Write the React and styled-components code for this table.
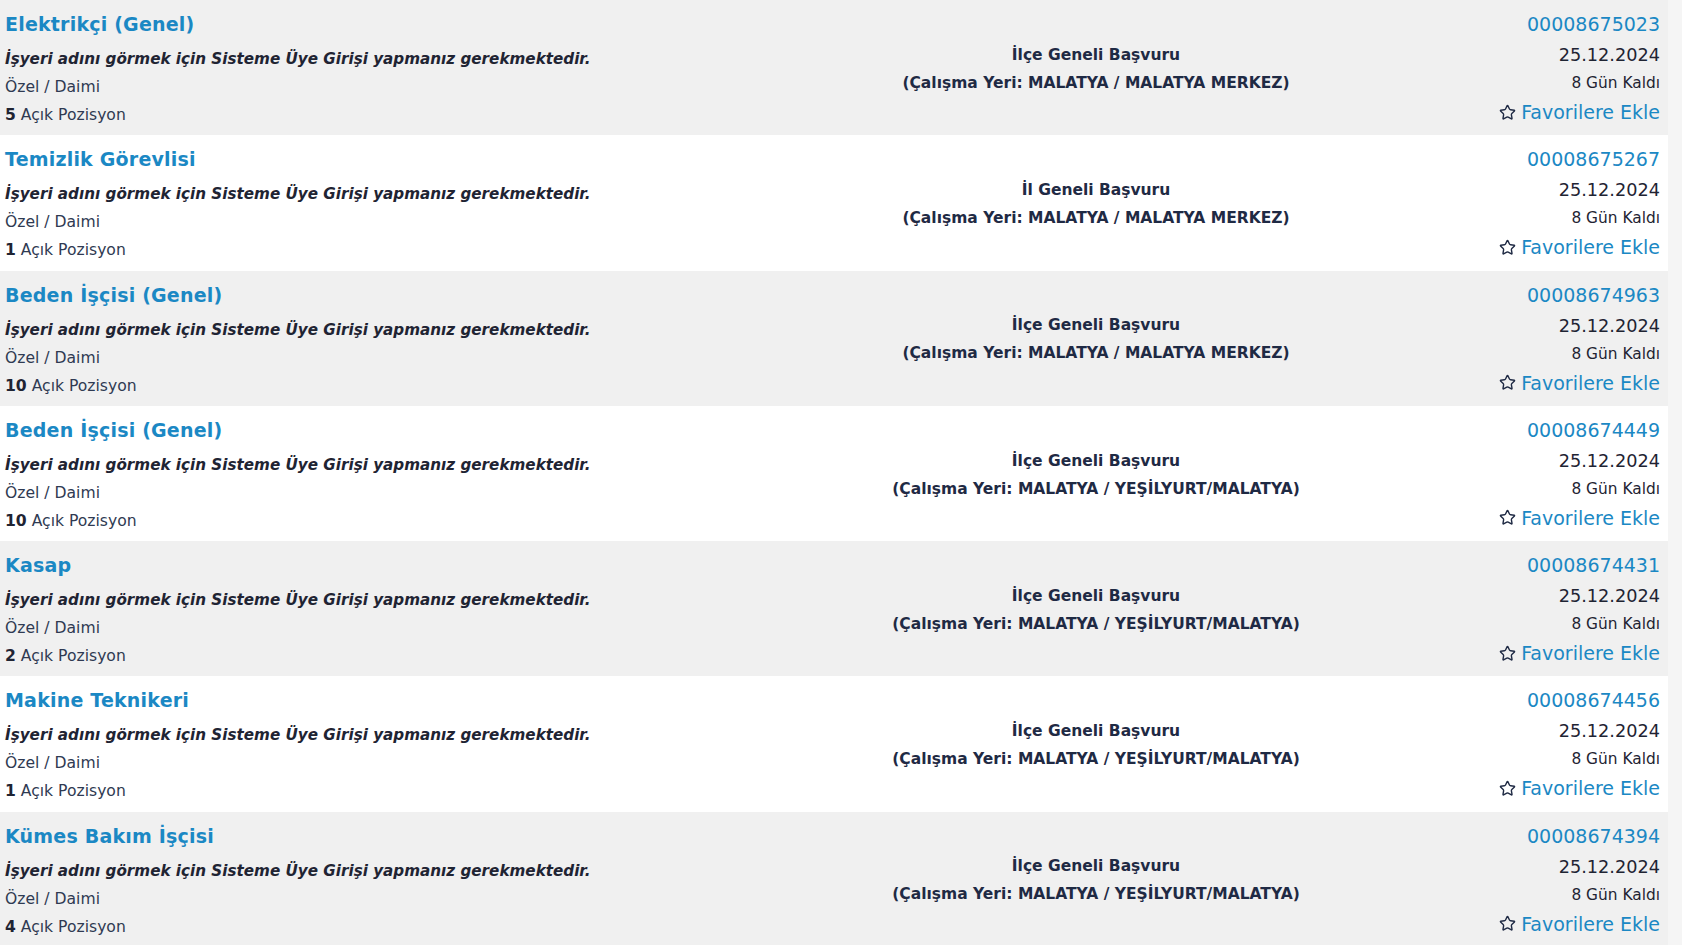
import React from "react";
import styled, { createGlobalStyle } from "styled-components";
import { Star } from "lucide-react";

const GlobalStyle = createGlobalStyle`
  html, body {
    margin: 0;
    padding: 0;
    background: #f6f6f6;
    font-family: "DejaVu Sans", Verdana, sans-serif;
    overflow: hidden;
  }
`;

const Page = styled.div`
  width: 1682px;
  height: 945px;
  overflow: hidden;
  display: flex;
  background: #f5f5f5;
`;

const List = styled.div`
  width: 1668px;
  display: flex;
  flex-direction: column;
`;

const Row = styled.div`
  height: 135.3px;
  flex-shrink: 0;
  display: grid;
  grid-template-columns: 820px 552px 1fr;
  background: ${(p) => (p.$alt ? "#ffffff" : "#f0f0f0")};
  box-sizing: border-box;
`;

const Left = styled.div`
  display: flex;
  flex-direction: column;
  padding: 10px 0 0 5px;
`;

const Title = styled.a`
  font-size: 19px;
  font-weight: bold;
  line-height: 28px;
  color: #1b88c4;
  text-decoration: none;
  margin-bottom: 7px;
  letter-spacing: 0.2px;
`;

const Notice = styled.div`
  font-size: 15.2px;
  font-weight: bold;
  font-style: italic;
  line-height: 28px;
  color: #1f2433;
`;

const Line = styled.div`
  font-size: 15.6px;
  line-height: 28px;
  color: #2f3a52;

  b {
    color: #1f2433;
  }
`;

const Middle = styled.div`
  display: flex;
  flex-direction: column;
  justify-content: center;
  align-items: center;
  padding-top: 2px;
  font-size: 15.5px;
  font-weight: bold;
  line-height: 28px;
  color: #1f2a44;
  text-align: center;
`;

const Right = styled.div`
  display: flex;
  flex-direction: column;
  align-items: flex-end;
  padding: 10px 8px 0 0;
`;

const Code = styled.a`
  font-size: 19px;
  line-height: 28px;
  color: #1b88c4;
  text-decoration: none;
  margin-bottom: 3px;
`;

const DateText = styled.div`
  font-size: 17.7px;
  line-height: 28px;
  color: #1f2433;
`;

const Remaining = styled.div`
  font-size: 15.4px;
  line-height: 28px;
  color: #1f2433;
`;

const Fav = styled.a`
  display: flex;
  align-items: center;
  gap: 5px;
  font-size: 19px;
  line-height: 30px;
  color: #1b88c4;
  text-decoration: none;

  svg {
    color: #1f2a44;
  }
`;

const jobs = [
  { title: "Elektrikçi (Genel)", scope: "İlçe Geneli Başvuru", place: "MALATYA / MALATYA MERKEZ", code: "00008675023", count: 5 },
  { title: "Temizlik Görevlisi", scope: "İl Geneli Başvuru", place: "MALATYA / MALATYA MERKEZ", code: "00008675267", count: 1 },
  { title: "Beden İşçisi (Genel)", scope: "İlçe Geneli Başvuru", place: "MALATYA / MALATYA MERKEZ", code: "00008674963", count: 10 },
  { title: "Beden İşçisi (Genel)", scope: "İlçe Geneli Başvuru", place: "MALATYA / YEŞİLYURT/MALATYA", code: "00008674449", count: 10 },
  { title: "Kasap", scope: "İlçe Geneli Başvuru", place: "MALATYA / YEŞİLYURT/MALATYA", code: "00008674431", count: 2 },
  { title: "Makine Teknikeri", scope: "İlçe Geneli Başvuru", place: "MALATYA / YEŞİLYURT/MALATYA", code: "00008674456", count: 1 },
  { title: "Kümes Bakım İşçisi", scope: "İlçe Geneli Başvuru", place: "MALATYA / YEŞİLYURT/MALATYA", code: "00008674394", count: 4 },
];

const App = () => {
  return (
    <Page>
      <GlobalStyle />
      <List>
        {jobs.map((job, i) => (
          <Row key={job.code} $alt={i % 2 === 1}>
            <Left>
              <Title href="#">{job.title}</Title>
              <Notice>İşyeri adını görmek için Sisteme Üye Girişi yapmanız gerekmektedir.</Notice>
              <Line>Özel / Daimi</Line>
              <Line>
                <b>{job.count}</b> Açık Pozisyon
              </Line>
            </Left>
            <Middle>
              <div>{job.scope}</div>
              <div>(Çalışma Yeri: {job.place})</div>
            </Middle>
            <Right>
              <Code href="#">{job.code}</Code>
              <DateText>25.12.2024</DateText>
              <Remaining>8 Gün Kaldı</Remaining>
              <Fav href="#">
                <Star size={17} strokeWidth={2} />
                Favorilere Ekle
              </Fav>
            </Right>
          </Row>
        ))}
      </List>
    </Page>
  );
};

export default App;
